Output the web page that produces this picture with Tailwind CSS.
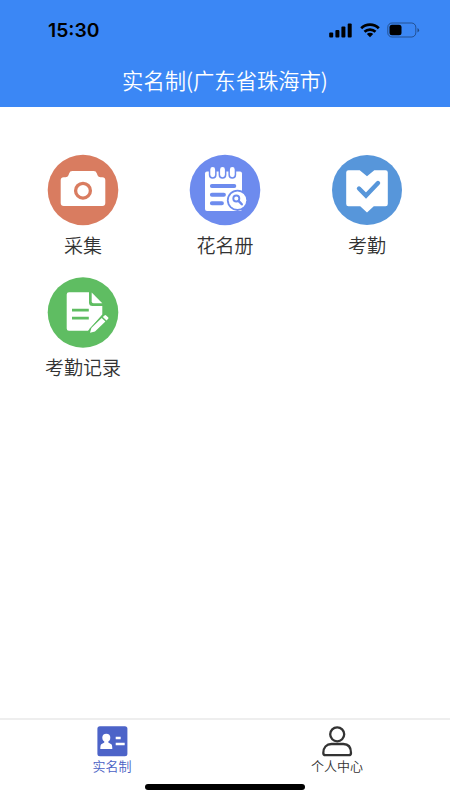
<!DOCTYPE html>
<html lang="zh-CN">
<head>
<meta charset="utf-8">
<title>实名制</title>
<script src="https://cdn.jsdelivr.net/npm/@tailwindcss/browser@4"></script>
</head>
<body class="bg-white font-['Noto_Sans_CJK_SC',sans-serif]">
<div class="w-[450px] h-[800px] flex flex-col overflow-hidden bg-white">
  <header class="h-[107px] shrink-0 bg-[#3b87f5] flex flex-col">
    <div class="h-[60px] flex items-center justify-between pl-12 pr-[30px]">
      <span class="font-['Inter',sans-serif] font-semibold text-[19.3px] leading-6 text-black">15:30</span>
      <div class="flex items-center">
        <svg class="w-[24px] h-[16px]" viewBox="0 0 24 16"><rect x="0.2" y="10.5" width="4" height="5" rx="1"/><rect x="6.4" y="8" width="4" height="7.5" rx="1"/><rect x="12.4" y="4.5" width="4" height="11" rx="1"/><rect x="18.7" y="1.5" width="4" height="14" rx="1"/></svg>
        <svg class="w-[20px] h-[16px] ml-[7px]" viewBox="0 0 20 16" fill="none" stroke="#000" stroke-width="2.7"><path d="M1.2 6.2a12.5 12.5 0 0 1 17.600 0M4.500 9.800a7.800 7.800 0 0 1 11 0"/><path d="M6.800 12.100a4.600 4.600 0 0 1 6.400 0L10 15.300Z" fill="#000" stroke="none"/></svg>
        <svg class="w-[33px] h-[16px] ml-[7px]" viewBox="0 0 33 16"><rect x="0.8" y="1" width="28" height="14" rx="4.2" fill="none" stroke="#000" stroke-opacity=".4"/><rect x="2.5" y="2.8" width="12" height="10.4" rx="2.5"/><path d="M30.500 6v4.400q1.600-.7 1.600-2.200T30.500 6Z" fill-opacity=".45"/></svg>
      </div>
    </div>
    <h1 class="h-[40px] flex items-center justify-center text-white text-[21.3px] leading-none font-[350]">实名制(广东省珠海市)</h1>
  </header>

  <main class="flex-1 px-3 pt-[47px]">
    <div class="grid grid-cols-3 gap-y-[18px] text-[19px] leading-[28px] text-[#333] font-[350]">
      <div class="flex flex-col items-center gap-[5px]">
        <svg class="w-[72px] h-[72px]" viewBox="-.5 -.5 72 72">
          <circle cx="35.5" cy="35.5" r="35.3" fill="#d97c60"/>
          <path fill="#fff" d="M16.2 22.8h1.8q2.2 0 3-2.1l.6-1.8q.8-2.4 3.2-2.4h21.4q2.4 0 3.2 2.4l.6 1.8q.8 2.1 3 2.1h1.800q3 0 3 3v22.700q0 3-3 3H16.200q-3 0-3-3V25.800q0-3 3-3Z"/>
          <circle cx="35.5" cy="36.2" r="7.4" fill="none" stroke="#d97c60" stroke-width="3.3"/>
        </svg>
        <span>采集</span>
      </div>
      <div class="flex flex-col items-center gap-[5px]">
        <svg class="w-[72px] h-[72px]" viewBox="-.5 -.5 72 72" stroke-linecap="round">
          <circle cx="35.5" cy="35.5" r="35.3" fill="#6d8bee"/>
          <rect x="15.5" y="17" width="37" height="39.5" rx="2" fill="#fff"/>
          <path d="M23.2 15v5.3M33 15v5.3M42.8 15v5.3" stroke="#6d8bee" stroke-width="7.8"/>
          <path d="M23.2 15v5.3M33 15v5.3M42.8 15v5.3" stroke="#fff" stroke-width="4.8"/>
          <path d="M22.4 31.4h22.4M22.4 40.2h12M22.4 48.8h10" stroke="#6d8bee" stroke-width="4"/>
          <circle cx="48" cy="45.8" r="10.6" fill="#6d8bee"/>
          <circle cx="48" cy="45.8" r="8.8" fill="#fff"/>
          <circle cx="46.8" cy="44" r="3" fill="none" stroke="#6d8bee" stroke-width="1.9"/>
          <path d="m49.3 46.6 3 3.2" stroke="#6d8bee" stroke-width="2.4"/>
        </svg>
        <span>花名册</span>
      </div>
      <div class="flex flex-col items-center gap-[5px]">
        <svg class="w-[72px] h-[72px]" viewBox="-.5 -.5 72 72">
          <circle cx="35.5" cy="35.5" r="35" fill="#5796da"/>
          <path fill="#fff" d="M17 15.7h11.2l7.3 6 7.3-6H54q2.3 0 2.3 2.3v31.500q0 2.300-2.300 2.300H42.300l-6.800 6.200-6.800-6.200H17q-2.300 0-2.300-2.300V18q0-2.300 2.300-2.300Z"/>
          <path d="m27.5 34 7 7L46.5 28.5" fill="none" stroke="#5796da" stroke-width="4.4" stroke-linecap="round"/>
        </svg>
        <span>考勤</span>
      </div>
      <div class="flex flex-col items-center gap-[4px]">
        <svg class="w-[72px] h-[72px]" viewBox="-.5 0 72 72">
          <circle cx="35.5" cy="35.5" r="35.3" fill="#5fbd62"/>
          <path fill="#fff" d="M21.5 15.2h20v10.300q0 3.500 3.500 3.500h9.800v8.500L40.500 53.700H21.500q-2.300 0-2.300-2.300V17.500q0-2.300 2.300-2.300Z"/>
          <path fill="#fff" d="M44.2 15.5 54.8 26.300h-8.800q-1.800 0-1.800-1.800Z"/>
          <path d="M24.5 33.2h16.8M24.5 41.2h16.8" stroke="#5fbd62" stroke-width="2.8"/>
          <path d="M41 58 42.300 51.500 55.500 37.600l6.500 4-13 14.800Z" fill="#5fbd62"/>
          <path d="M42.500 55.800 43.900 51 54.200 41l3.700 3.400L47.500 54.400ZM55.300 40l2-1.700q.7-.5 1.300.1l2 1.900q.7.700.1 1.400l-1.700 1.700Z" fill="#fff"/>
        </svg>
        <span>考勤记录</span>
      </div>
    </div>
  </main>

  <nav class="h-[82px] shrink-0 border-t-2 border-[#eeeeee] grid grid-cols-[224px_226px] text-[13px] leading-[18px] font-[350]">
    <div class="flex flex-col items-center pt-[6px] text-[#4a60c4]">
      <svg class="w-[31px] h-[31px]" viewBox="0 0 31 31">
        <rect x="0.4" y="0.3" width="30" height="30" rx="2.5" fill="#4c63c8"/>
        <circle cx="9.3" cy="11.8" r="4" fill="#fff"/>
        <path fill="#fff" d="M7.3 14h4v2.5l3 1.700q1 .7 1 4.800H3.300q0-4.100 1-4.800l3-1.700Z"/>
        <path d="M18.7 12h5M18.7 18h9" stroke="#fff" stroke-width="2.3"/>
      </svg>
      <span>实名制</span>
    </div>
    <div class="flex flex-col items-center pt-[6px] text-[#333]">
      <svg class="w-[31px] h-[31px]" viewBox="0 0 31 31" fill="none" stroke="#333" stroke-width="2.3">
        <circle cx="15.2" cy="8.3" r="7"/>
        <path d="M9.500 18h11.800c5 0 7.700 3.500 7.700 9 0 1.500-.7 2.200-2.200 2.200H3.500c-1.500 0-2.200-.7-2.200-2.200 0-5.500 3.200-9 8.200-9Z"/>
      </svg>
      <span>个人中心</span>
    </div>
  </nav>
  <div class="absolute top-[784px] left-[145px] w-[160px] h-[6px] rounded-full bg-black"></div>
</div>
</body>
</html>
